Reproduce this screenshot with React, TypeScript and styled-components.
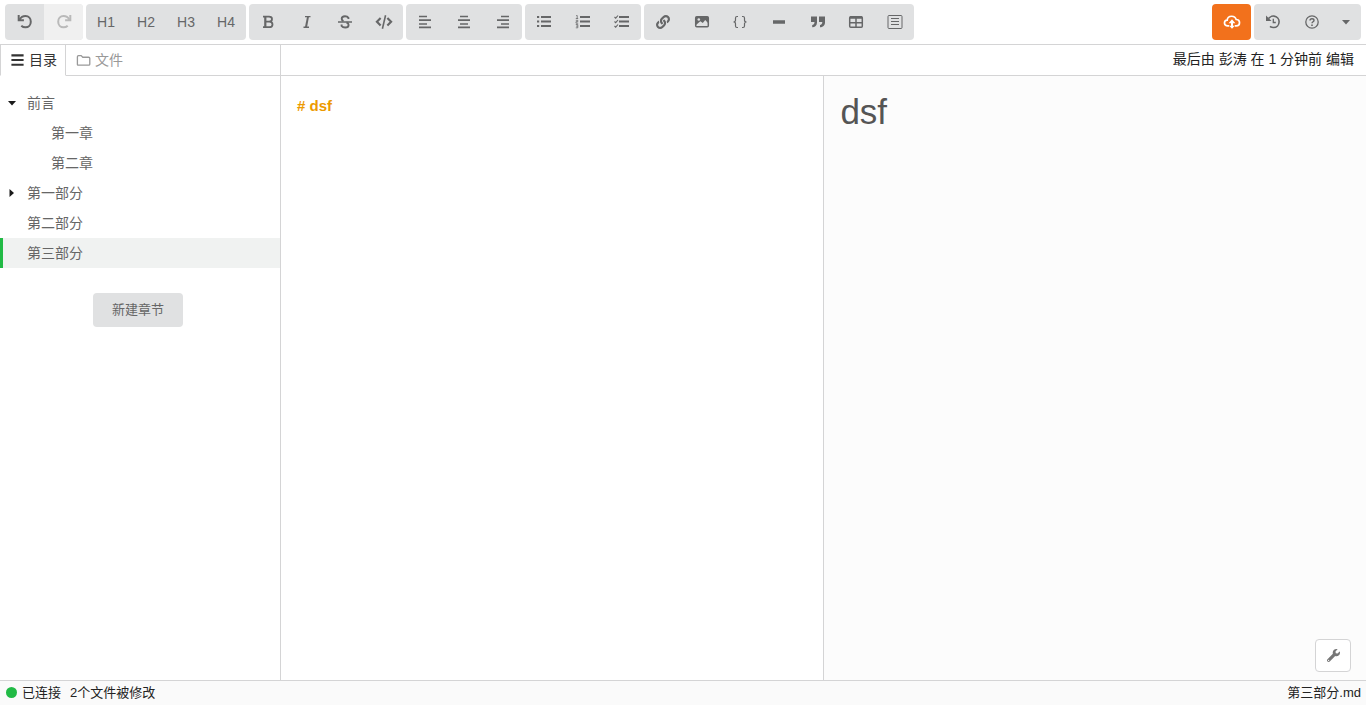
import React from 'react';
import styled, { createGlobalStyle, css } from 'styled-components';
import { FaLink, FaWrench } from 'react-icons/fa';

const GlobalStyle = createGlobalStyle`
  *, *::before, *::after { box-sizing: border-box; }
  body {
    margin: 0;
    font-family: "Liberation Sans", "Noto Sans CJK SC", sans-serif;
    font-size: 14px;
    line-height: 20px;
    color: #222;
    background: #fff;
  }
  button, input, textarea { font: inherit; }
  svg { display: block; flex: none; }
`;

const line = '#d4d4d5';

const Page = styled.div`
  display: flex;
  flex-direction: column;
  height: 100vh;
`;

const Toolbar = styled.header`
  display: flex;
  gap: 3px;
  padding: 4px 5px;
  border-bottom: 1px solid ${line};
`;

const Spacer = styled.div`
  flex: 1;
`;

const Group = styled.div<{ $width: number }>`
  display: flex;
  width: ${(p) => p.$width}px;
  height: 36px;
  border-radius: 4px;
  background: #e0e1e2;
  overflow: hidden;
`;

const ToolButton = styled.button<{ $primary?: boolean; $narrow?: boolean }>`
  display: flex;
  flex: ${(p) => (p.$narrow ? '0 0 30px' : '1 1 0')};
  align-items: center;
  justify-content: center;
  padding: 0;
  border: 0;
  color: ${(p) => (p.$primary ? '#fff' : '#666768')};
  background: ${(p) => (p.$primary ? '#f2711c' : 'transparent')};
  cursor: pointer;

  &:disabled {
    color: #b9b9b9;
    background: #f0f0f0;
    cursor: default;
  }
`;

const SubBar = styled.div`
  display: flex;
  height: 31px;
`;

const TabList = styled.nav`
  display: flex;
  width: 281px;
  border-right: 1px solid ${line};
`;

const Tab = styled.button<{ $active?: boolean }>`
  display: flex;
  align-items: center;
  gap: 4px;
  padding: 0 8px 0 10px;
  border: 0;
  border-bottom: 1px solid ${line};
  color: #999;
  background: #fff;
  cursor: pointer;

  ${(p) =>
    p.$active
      ? css`
          border-left: 1px solid ${line};
          border-right: 1px solid ${line};
          border-bottom-color: #fff;
          color: #333;
          padding-left: 9px;
        `
      : css`
          flex: 1;
        `}
`;

const LastEdit = styled.div`
  flex: 1;
  padding: 4px 12px 0 0;
  border-bottom: 1px solid ${line};
  text-align: right;
`;

const Body = styled.div`
  display: flex;
  flex: 1;
  min-height: 0;
`;

const Sidebar = styled.aside`
  flex: none;
  width: 281px;
  padding-top: 12px;
  border-right: 1px solid ${line};
  overflow: auto;
`;

const Tree = styled.ul`
  margin: 0;
  padding: 0;
  list-style: none;
`;

const TreeRow = styled.li<{ $depth: number; $active?: boolean }>`
  display: flex;
  align-items: center;
  height: 30px;
  padding-left: ${(p) => 5 + p.$depth * 24}px;
  border-left: 3px solid ${(p) => (p.$active ? '#21ba45' : 'transparent')};
  background: ${(p) => (p.$active ? '#f0f2f1' : 'transparent')};
  color: #666;
`;

const Arrow = styled.span`
  width: 19px;
  color: #1a1a1a;
`;

const NewRow = styled.div`
  display: flex;
  justify-content: center;
  padding: 25px 4px 0 0;
`;

const NewButton = styled.button`
  height: 34px;
  padding: 0 19px;
  border: 0;
  border-radius: 4px;
  background: #e0e1e2;
  color: #666;
  font-size: 13px;
  cursor: pointer;
`;

const Editor = styled.textarea`
  flex: 1 1 50%;
  min-width: 0;
  padding: 20px 16px;
  border: 0;
  outline: 0;
  resize: none;
  color: #ec9a00;
  font-size: 15px;
  font-weight: 700;
  line-height: 20px;
`;

const Preview = styled.section`
  position: relative;
  flex: 1 1 50%;
  min-width: 0;
  padding: 16px;
  border-left: 1px solid ${line};
  background: #fcfcfc;
`;

const Title = styled.h1`
  margin: 0;
  color: #555;
  font-size: 35px;
  font-weight: 400;
  line-height: 40px;
`;

const SettingsButton = styled.button`
  position: absolute;
  right: 15px;
  bottom: 8px;
  display: flex;
  align-items: center;
  justify-content: center;
  width: 36px;
  height: 33px;
  padding: 0;
  border: 1px solid ${line};
  border-radius: 4px;
  background: #fff;
  color: #777;
  cursor: pointer;
`;

const StatusBar = styled.footer`
  display: flex;
  align-items: center;
  height: 25px;
  padding: 0 5px 1px 6px;
  border-top: 1px solid ${line};
  background: #fafafa;
  font-size: 13px;
`;

const Dot = styled.span`
  width: 11px;
  height: 11px;
  margin-right: 5px;
  border-radius: 50%;
  background: #21ba45;
`;

const Changes = styled.span`
  flex: 1;
  padding-left: 9px;
`;

const Icon = ({ children, size = 16 }: { children: React.ReactNode; size?: number }) => (
  <svg
    width={size}
    height={size}
    viewBox="0 0 16 16"
    fill="none"
    stroke="currentColor"
    strokeWidth="2"
    aria-hidden="true"
  >
    {children}
  </svg>
);

const UndoIcon = () => (
  <Icon>
    <path d="M1.700 1v5.200h5.200" strokeWidth="2" />
    <path d="M2.500 5.800C4 3 6.300 2.100 8.500 2.100C11.700 2.100 13.800 4.700 13.800 7.700C13.800 10.900 11.500 13.300 8.500 13.300C6.800 13.300 5.500 12.800 4.300 11.700" strokeWidth="2" />
  </Icon>
);

const RedoIcon = () => (
  <Icon>
    <path d="M14.300 1v5.200H9.100" strokeWidth="2" />
    <path d="M13.500 5.800C12 3 9.700 2.100 7.500 2.100C4.300 2.100 2.200 4.700 2.200 7.700C2.200 10.900 4.500 13.300 7.500 13.300C9.200 13.300 10.500 12.800 11.700 11.700" strokeWidth="2" />
  </Icon>
);

const BoldIcon = () => (
  <Icon>
    <path d="M3 2.700H9C11 2.700 12 3.600 12 5.100C12 6.600 11 7.700 9.200 7.700H5.500M9.200 7.700C11.400 7.700 12.500 8.800 12.500 10.400C12.500 12.200 11.300 13.200 9.200 13.200H3" strokeWidth="1.800" />
    <path d="M5.300 2.700v10.500" strokeWidth="2.200" />
  </Icon>
);

const ItalicIcon = () => (
  <Icon>
    <path d="M6 2.600h5.500M4.500 13.300H10" strokeWidth="1.400" />
    <path d="M9 2.600L7 13.300" strokeWidth="2" />
  </Icon>
);

const StrikeIcon = () => (
  <Icon>
    <path d="M1 8h14" strokeWidth="1.400" />
    <path d="M11.400 5V3.700C10.800 2.800 9.700 2.200 8 2.200C6 2.200 4.700 3.200 4.700 4.800C4.700 6 5.400 6.700 6.500 7.200M9.500 8.500C11 9 11.600 9.900 11.600 10.900C11.600 12.600 10.200 13.500 8.200 13.500C6.500 13.500 5.300 13 4.600 12V10.500" strokeWidth="1.900" />
  </Icon>
);

const CodeIcon = () => (
  <Icon size={18}>
    <path d="M5 4.500L1.700 7.800L5 11.100M11 4.500L14.300 7.800L11 11.100" strokeWidth="1.900" />
    <path d="M9.400 2L6.600 14" strokeWidth="1.400" />
  </Icon>
);

const AlignIcon = ({ side }: { side: 'left' | 'center' | 'right' }) => {
  const x = { left: 2, center: 4, right: 6 }[side];
  return (
    <Icon>
      <path d={`M${x} 2.500h8M${x} 10h8`} strokeWidth="1.400" />
      <path d="M2 6.200h12M2 13.300h12" strokeWidth="1.800" />
    </Icon>
  );
};

const ListIcon = ({ kind }: { kind: 'bullet' | 'number' | 'check' }) => (
  <Icon>
    <path d="M5 3h10M5 7.500h10M5 12h10" strokeWidth="1.800" />
    {kind === 'bullet' && <path d="M1 3h2.200M1 7.500h2.200M1 12h2.200" />}
    {kind === 'number' && (
      <path
        d="M1.200 1.500h1v3M.8 4.500h2.400M.8 6.300h2v1.400H1v1.500h2.200M.8 10.500h2v3.300H.8M1 12.100h1.800"
        strokeWidth=".8"
      />
    )}
    {kind === 'check' && (
      <path d="M.5 3l1.200 1.200L4 1.500M.5 7.500l1.200 1.200L4 6M.5 12l1.200 1.200L4 10.500" strokeWidth="1.100" />
    )}
  </Icon>
);

const ImageIcon = () => (
  <Icon>
    <rect x="1.700" y="2.800" width="12.600" height="10" rx="1" strokeWidth="1.500" />
    <path d="M2 3h12v6L11.200 6L8.800 9L6.300 7.200L2 11z" fill="currentColor" stroke="none" />
    <circle cx="4.800" cy="5.500" r="1.300" fill="#e0e1e2" stroke="none" />
  </Icon>
);

const BracesIcon = () => (
  <Icon>
    <path
      d="M6 2.500H5C3.900 2.500 3.500 3 3.500 4v2.300C3.500 7.300 3 8 1.500 8C3 8 3.500 8.700 3.500 9.700V12C3.500 13 3.900 13.500 5 13.500H6M10 2.500h1C12.100 2.500 12.500 3 12.500 4v2.300C12.500 7.300 13 8 14.500 8C13 8 12.500 8.700 12.500 9.700V12C12.500 13 12.100 13.500 11 13.500H10"
      strokeWidth="1.200"
    />
  </Icon>
);

const QuoteIcon = () => (
  <Icon>
    <path
      d="M1 2.500h6v6C7 11.500 5 13.300 2.200 13.300V11C3.700 10.700 4.500 9.800 4.500 8H1zM9 2.500h6v6C15 11.500 12.800 13.300 10 13.300V11C11.500 10.700 12.300 9.800 12.300 8H9z"
      fill="currentColor"
      stroke="none"
    />
  </Icon>
);

const TableIcon = () => (
  <Icon>
    <rect x="1.700" y="2.700" width="12.600" height="10.600" rx="1" strokeWidth="1.500" />
    <path d="M2 3.500h12" strokeWidth="2.500" />
    <path d="M2 8.800h12M8 4v9" strokeWidth="1.500" />
  </Icon>
);

const DocIcon = () => (
  <Icon>
    <rect x="1" y="1.500" width="14" height="13" rx="1" strokeWidth="1" />
    <path d="M4 4.500h8M4 7.500h8M4 10.500h8" strokeWidth="1" />
  </Icon>
);

const CloudIcon = () => (
  <Icon size={18}>
    <path
      d="M5.500 11.500H4.200C2.400 11.500 1.300 10.400 1.300 8.900C1.300 7.500 2.300 6.500 3.700 6.400C3.900 4.200 5.600 2.900 7.700 2.900C9.700 2.900 11.200 4 11.700 5.800C13.500 5.800 14.700 7 14.700 8.600C14.700 10.200 13.500 11.500 11.800 11.500H10.500"
      strokeWidth="1.500"
    />
    <path d="M8 12.500V7.500" strokeWidth="1.800" />
    <path d="M8 5.500L11 9H5zM8 14L5.500 11.300h5z" fill="currentColor" stroke="none" />
  </Icon>
);

const HistoryIcon = () => (
  <Icon>
    <path
      d="M3.500 4.500C5 2.700 7 1.900 9 2.100C12 2.400 14.100 4.800 14.100 7.700C14.100 11 11.700 13.500 8.500 13.500C7.200 13.500 6 13.100 5 12.300"
      strokeWidth="1.600"
    />
    <path d="M1 1.500v5.500h5.500z" fill="currentColor" stroke="none" />
    <path d="M8.300 4.800v3.700h2.500" strokeWidth="1.300" />
  </Icon>
);

const HelpIcon = () => (
  <Icon>
    <circle cx="8" cy="8" r="6.200" strokeWidth="1.300" />
    <path d="M6 6.600C6 5.300 6.800 4.800 8 4.800C9.200 4.800 10 5.500 10 6.500C10 7.700 8 7.900 8 9.300" strokeWidth="1.400" />
    <path d="M7.200 11.200h1.600" strokeWidth="1.500" />
  </Icon>
);

const MenuIcon = () => (
  <Icon size={15}>
    <path d="M1.500 2.500h13M1.500 7.500h13M1.500 12.500h13" strokeWidth="2.200" />
  </Icon>
);

const FolderIcon = () => (
  <Icon size={15}>
    <path d="M1.500 12V4C1.500 3.200 1.800 2.800 2.600 2.800H5.500L7.200 4.500H13.500C14.200 4.500 14.700 4.900 14.700 5.500V12C14.700 12.700 14.200 13 13.500 13H2.500C1.800 13 1.500 12.700 1.500 12z" strokeWidth="1.400" />
  </Icon>
);

const Caret = ({ dir = 'down' }: { dir?: 'down' | 'right' }) => (
  <svg width="8" height="8" viewBox="0 0 8 8" fill="currentColor" aria-hidden="true">
    <path d={dir === 'down' ? 'M0 2h8L4 6.500z' : 'M1.500 0v8L6 4z'} />
  </svg>
);

const chapters = [
  { name: '前言', depth: 0, arrow: 'down' as const },
  { name: '第一章', depth: 1 },
  { name: '第二章', depth: 1 },
  { name: '第一部分', depth: 0, arrow: 'right' as const },
  { name: '第二部分', depth: 0 },
  { name: '第三部分', depth: 0, active: true },
];

type Tool = { label: string; icon: React.ReactNode; disabled?: boolean };

const toolGroups: { width: number; tools: Tool[] }[] = [
  {
    width: 78,
    tools: [
      { label: '撤销', icon: <UndoIcon /> },
      { label: '重做', icon: <RedoIcon />, disabled: true },
    ],
  },
  {
    width: 160,
    tools: ['H1', 'H2', 'H3', 'H4'].map((h) => ({ label: h, icon: h })),
  },
  {
    width: 154,
    tools: [
      { label: '粗体', icon: <BoldIcon /> },
      { label: '斜体', icon: <ItalicIcon /> },
      { label: '删除线', icon: <StrikeIcon /> },
      { label: '代码', icon: <CodeIcon /> },
    ],
  },
  {
    width: 116,
    tools: [
      { label: '左对齐', icon: <AlignIcon side="left" /> },
      { label: '居中', icon: <AlignIcon side="center" /> },
      { label: '右对齐', icon: <AlignIcon side="right" /> },
    ],
  },
  {
    width: 116,
    tools: [
      { label: '无序列表', icon: <ListIcon kind="bullet" /> },
      { label: '有序列表', icon: <ListIcon kind="number" /> },
      { label: '任务列表', icon: <ListIcon kind="check" /> },
    ],
  },
  {
    width: 270,
    tools: [
      { label: '链接', icon: <FaLink size={14} /> },
      { label: '图片', icon: <ImageIcon /> },
      { label: '代码块', icon: <BracesIcon /> },
      { label: '分隔线', icon: <Icon><path d="M2 8h12" strokeWidth="3.500" /></Icon> },
      { label: '引用', icon: <QuoteIcon /> },
      { label: '表格', icon: <TableIcon /> },
      { label: '摘要', icon: <DocIcon /> },
    ],
  },
];

export default function App() {
  return (
    <Page>
      <GlobalStyle />
      <Toolbar>
        {toolGroups.map((group, i) => (
          <Group key={i} $width={group.width}>
            {group.tools.map((tool) => (
              <ToolButton key={tool.label} aria-label={tool.label} disabled={tool.disabled}>
                {tool.icon}
              </ToolButton>
            ))}
          </Group>
        ))}
        <Spacer />
        <Group $width={39}>
          <ToolButton $primary aria-label="上传"><CloudIcon /></ToolButton>
        </Group>
        <Group $width={107}>
          <ToolButton aria-label="历史"><HistoryIcon /></ToolButton>
          <ToolButton aria-label="帮助"><HelpIcon /></ToolButton>
          <ToolButton $narrow aria-label="更多"><Caret /></ToolButton>
        </Group>
      </Toolbar>
      <SubBar>
        <TabList>
          <Tab $active><MenuIcon />目录</Tab>
          <Tab><FolderIcon />文件</Tab>
        </TabList>
        <LastEdit>最后由 彭涛 在 1 分钟前 编辑</LastEdit>
      </SubBar>
      <Body>
        <Sidebar>
          <Tree>
            {chapters.map((c) => (
              <TreeRow key={c.name} $depth={c.depth} $active={c.active}>
                <Arrow>{c.arrow && <Caret dir={c.arrow} />}</Arrow>
                {c.name}
              </TreeRow>
            ))}
          </Tree>
          <NewRow><NewButton>新建章节</NewButton></NewRow>
        </Sidebar>
        <Editor aria-label="编辑器" defaultValue="# dsf" spellCheck={false} />
        <Preview>
          <Title>dsf</Title>
          <SettingsButton aria-label="设置"><FaWrench size={13} /></SettingsButton>
        </Preview>
      </Body>
      <StatusBar>
        <Dot />
        <span>已连接</span>
        <Changes>2个文件被修改</Changes>
        <span>第三部分.md</span>
      </StatusBar>
    </Page>
  );
}
